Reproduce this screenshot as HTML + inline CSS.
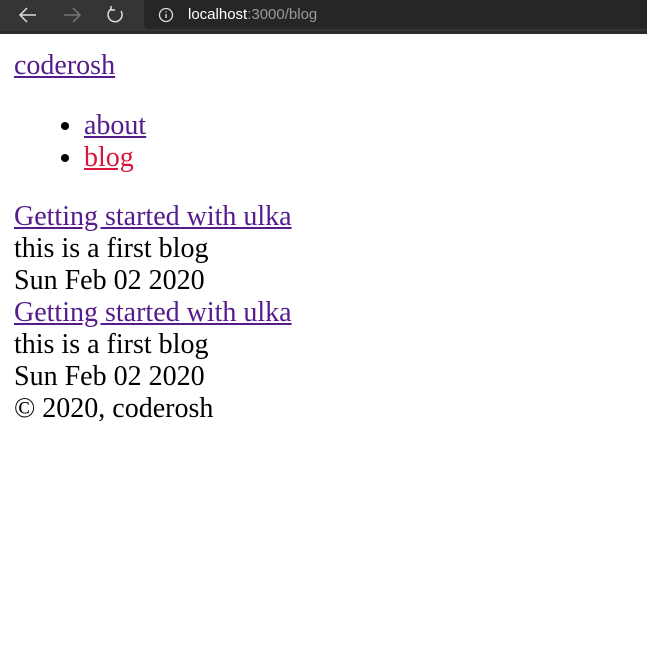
<!DOCTYPE html>
<html><head><style>
*{margin:0;padding:0}
body{width:647px;height:654px;background:#fff;font-family:"Liberation Serif",serif;font-size:28px;line-height:32px;color:#000;overflow:hidden}
.bar{height:31px;background:#353535;position:relative;border-bottom:3px solid #2a2a2a}
.url{position:absolute;left:144px;top:0;right:0;height:29px;background:#262626;border-radius:0 0 0 4px}
.url span{position:absolute;left:44px;top:5px;font-family:"Liberation Sans",sans-serif;font-size:15px;line-height:20px;color:#fff}
.url span i{font-style:normal;color:#999}
a{color:#551a8b;text-decoration:underline}
.c{padding:16px 0 0 14px}
ul{margin:28px 0 27px 0;padding-left:70px}
li{list-style:disc}
</style></head><body>
<div class="bar">
<svg width="140" height="31" style="position:absolute;left:0;top:0">
<g fill="none" stroke-width="1.5">
<path d="M20 15 H36 M27 8 L20 15 L27 22" stroke="#ddd"/>
<path d="M64 15 H80 M73 8 L80 15 L73 22" stroke="#777"/>
<path d="M111 9 A7 7 0 1 0 121 11" stroke="#ddd"/>
<path d="M111 6 V10 H115" stroke="#ddd"/>
</g></svg>
<div class="url">
<svg width="20" height="20" style="position:absolute;left:13px;top:5px"><circle cx="9" cy="10" r="6.5" fill="none" stroke="#ddd" stroke-width="1.3"/><path d="M9 9v4M9 6.5v1" stroke="#ddd" stroke-width="1.4"/></svg>
<span>localhost<i>:3000/blog</i></span></div>
</div>
<div class="c">
<div><a>coderosh</a></div>
<ul><li><a>about</a></li><li><a style="color:#dc143c">blog</a></li></ul>
<div><a>Getting started with ulka</a></div>
<div>this is a first blog</div>
<div>Sun Feb 02 2020</div>
<div><a>Getting started with ulka</a></div>
<div>this is a first blog</div>
<div>Sun Feb 02 2020</div>
<div>© 2020, coderosh</div>
</div>
</body></html>
